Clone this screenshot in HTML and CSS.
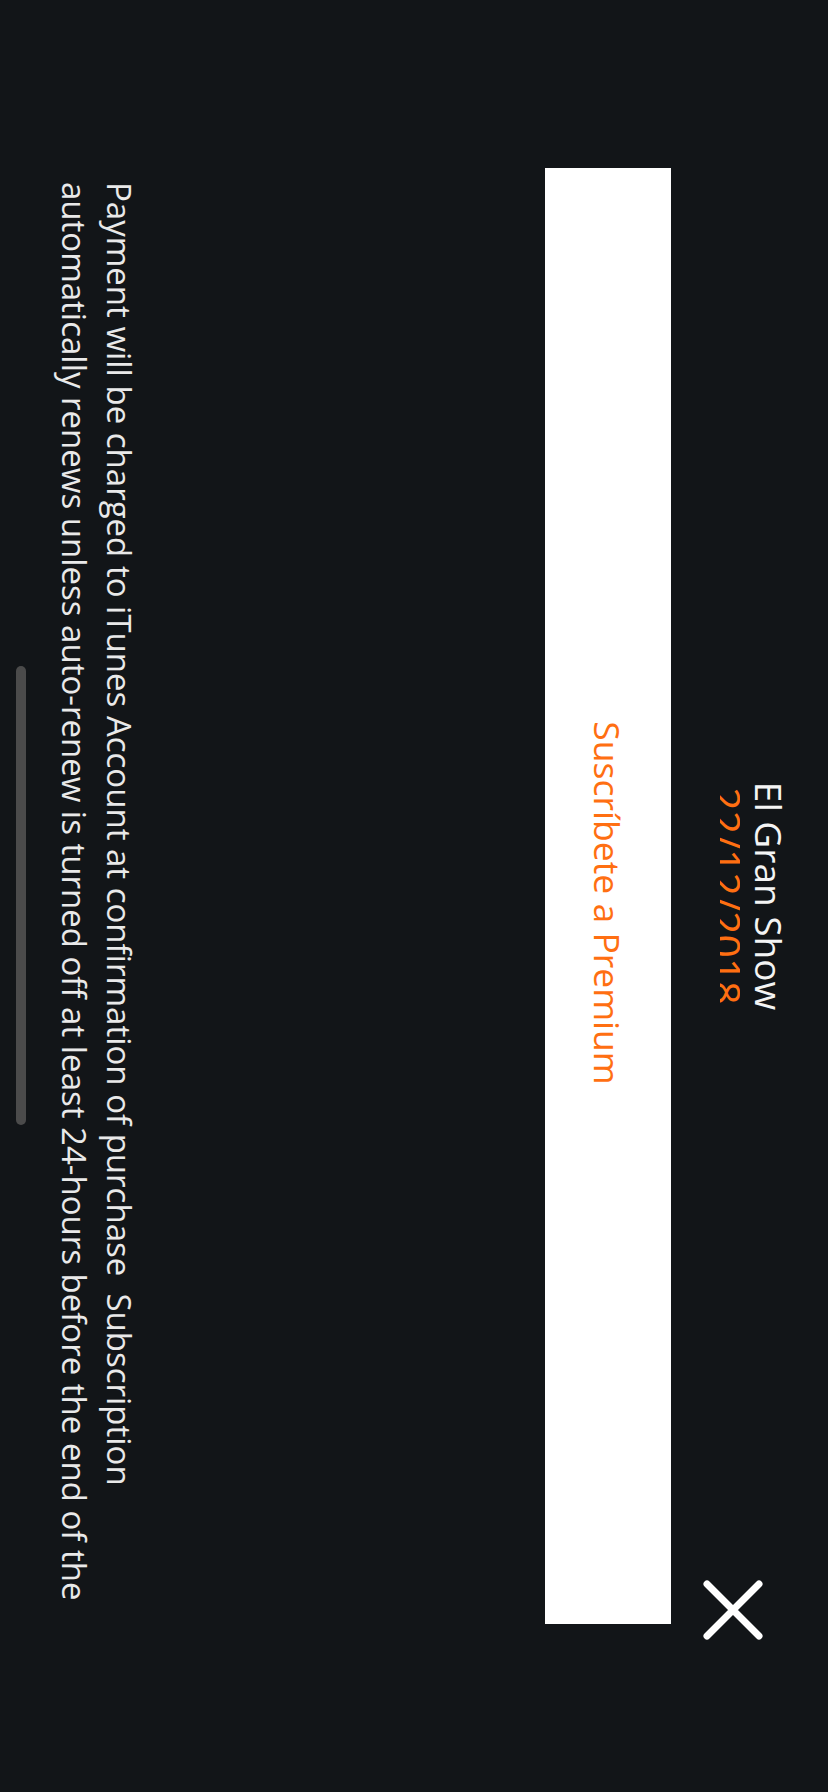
FILE: index.html
```html
<!DOCTYPE html>
<html lang="es">
<head>
<meta charset="utf-8">
<title>El Gran Show</title>
<link rel="stylesheet" href="styles.css">
</head>
<body>
<div class="screen">
  <header class="top">
    <div class="spacer"></div>
    <div class="titles">
      <h1 class="title">El Gran Show</h1>
      <div class="date"><span class="date-text">22/12/2018</span></div>
    </div>
    <button class="close" aria-label="Cerrar">
      <svg width="60" height="60" viewBox="0 0 60 60"><path d="M4 4 L56 56 M56 4 L4 56" stroke="#fff" stroke-width="7" stroke-linecap="round" fill="none"/></svg>
    </button>
  </header>
  <div class="cta">Suscríbete a Premium</div>
  <div class="legal-wrap">
    <p class="legal">Payment will be charged to iTunes Account at confirmation of purchase&nbsp; Subscription automatically renews unless auto-renew is turned off at least 24-hours before the end of the current period. Account will be charged for renewal within 24-hours prior to the end of the current period, and identify the cost of the renewal.</p>
  </div>
  <div class="home-indicator"></div>
</div>
</body>
</html>
```

FILE: styles.css
```css
html, body {
  margin: 0;
  padding: 0;
  background: #121518;
  overflow: hidden;
}
body {
  width: 828px;
  height: 1792px;
  font-family: "Open Sans", "Noto Sans", sans-serif;
}
.screen {
  position: relative;
  width: 1792px;
  height: 828px;
  overflow: hidden;
  background: #121518;
  transform-origin: 0 0;
  transform: translateX(828px) rotate(90deg);
  box-sizing: border-box;
  padding-top: 34px;
}
.top {
  display: grid;
  grid-template-columns: 1fr auto 1fr;
  align-items: start;
}
.titles {
  display: flex;
  flex-direction: column;
  align-items: center;
}
.title {
  margin: 0;
  font-weight: 400;
  font-size: 37px;
  line-height: 50px;
  color: #f4f4f4;
}
.date {
  margin-top: 4px;
  height: 20px;
  overflow: hidden;
}
.date-text {
  display: block;
  font-size: 41px;
  line-height: 41px;
  margin-top: -7px;
  color: #ff6f12;
}
.close {
  justify-self: end;
  margin: 31px 152px 0 0;
  padding: 0;
  width: 60px;
  height: 60px;
  background: none;
  border: 0;
  display: flex;
}
.cta {
  margin: 32px 168px 0;
  padding-left: 14px;
  height: 126px;
  background: #ffffff;
  color: #ff6f12;
  font-size: 35.5px;
  display: flex;
  align-items: center;
  justify-content: center;
}
.legal-wrap {
  margin: 403px 168px 0 182px;
  height: 94px;
  overflow: hidden;
}
.legal {
  margin: 0;
  font-size: 33px;
  line-height: 45px;
  color: #e9e9e9;
}
.home-indicator {
  position: absolute;
  left: 666px;
  bottom: 16px;
  width: 459px;
  height: 10px;
  border-radius: 5px;
  background: #4b4b4b;
}
```
